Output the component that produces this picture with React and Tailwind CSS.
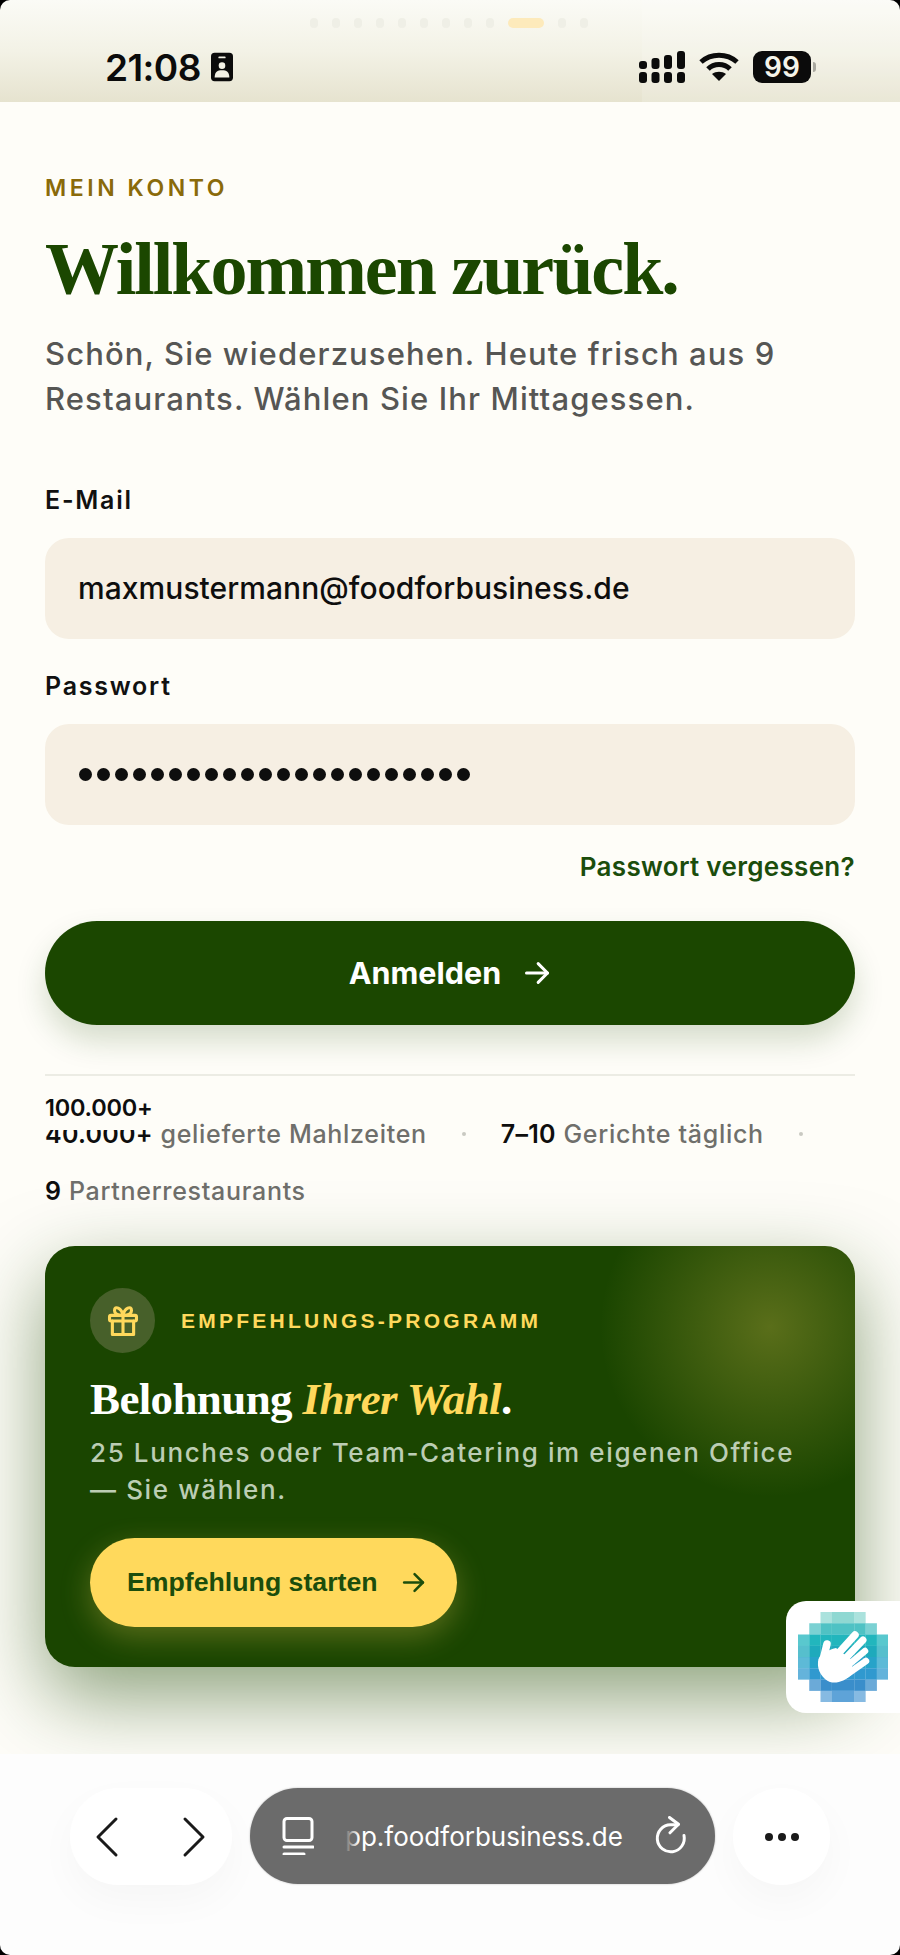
import React from "react";

const gridRows = [
  [2, 5],
  [1, 6],
  [0, 7],
  [0, 7],
  [0, 7],
  [0, 7],
  [1, 6],
  [2, 5],
];
const rowColors = ["#8fd8d2", "#4fc2c4", "#22b6bd", "#1eaabc", "#27a3c9", "#3099cf", "#3a8ecb", "#5ea3d8"];

const HandLogo = () => (
  <svg width="90" height="90" viewBox="0 0 90 90">
    {gridRows.map(([from, to], r) =>
      Array.from({ length: to - from + 1 }).map((_, i) => {
        const c = from + i;
        const edge = c === from || c === to;
        return (
          <rect
            key={`${r}-${c}`}
            x={c * 11.25}
            y={r * 11.25}
            width="11.4"
            height="11.4"
            fill={rowColors[r]}
            opacity={edge ? 0.75 : 1}
          />
        );
      })
    )}
    <g stroke="#fff" strokeLinecap="round" fill="none">
      <path d="M24 52 L29 32" strokeWidth="7.5" />
      <path d="M38 44 L57 23" strokeWidth="7.5" />
      <path d="M44 50 L65 28" strokeWidth="7" />
      <path d="M48 55 L67 39" strokeWidth="6.5" />
      <path d="M48 63 L68 49" strokeWidth="6.5" />
    </g>
    <path d="M20 50 C20 42 30 38 38 36 L54 48 L54 62 C47 69 39 72 32 70 C25 67 19 59 20 50 Z" fill="#fff" />
  </svg>
);

const ArrowRight = ({ size = 28, color = "#fff", sw = 2.6 }) => (
  <svg width={size} height={size} viewBox="0 0 24 24" fill="none" stroke={color} strokeWidth={sw} strokeLinecap="round" strokeLinejoin="round">
    <path d="M3 12h18" />
    <path d="M13 4l8 8-8 8" />
  </svg>
);

const StatusBar = () => (
  <div className="relative flex h-[102px] shrink-0 items-center justify-between rounded-t-[10px] bg-gradient-to-b from-[#fbfbf6] via-[#f3f2e6] to-[#e6e3cf] pl-[105px] pr-[84px] pt-[32px]">
    <div className="absolute inset-y-0 right-0 w-[258px] rounded-tr-[10px] bg-white/15" />
    <div className="absolute left-[310px] top-[18px] flex items-center gap-[14px]">
      {Array.from({ length: 9 }).map((_, i) => (
        <div key={i} className="h-[10px] w-[8px] rounded-full bg-[#efefe6]" />
      ))}
      <div className="h-[10px] w-[36px] rounded-full bg-[#fdeabb]" />
      {Array.from({ length: 2 }).map((_, i) => (
        <div key={i} className="h-[10px] w-[8px] rounded-full bg-[#efefe6]" />
      ))}
    </div>
    <div className="relative flex items-center gap-[10px]">
      <span className="text-[37px] font-semibold leading-none tracking-[-0.015em] text-[#0b0b0b]">21:08</span>
      <svg width="22" height="30" viewBox="0 0 24 31">
        <rect width="24" height="31" rx="4" fill="#0b0b0b" />
        <rect x="8" y="4" width="8" height="2" rx="1" fill="#f3f2e6" />
        <circle cx="12" cy="14" r="3.6" fill="#f3f2e6" />
        <path d="M4 27c0-6 3-8 8-8s8 2 8 8z" fill="#f3f2e6" />
      </svg>
    </div>
    <div className="relative flex items-center gap-[14px]">
      <svg width="46" height="32" viewBox="0 0 46 32" fill="#0b0b0b">
        <rect x="0" y="10" width="8" height="8" rx="3" />
        <rect x="12.5" y="7" width="8" height="11" rx="3" />
        <rect x="25" y="4" width="8" height="14" rx="3" />
        <rect x="38" y="0" width="8" height="18" rx="3" />
        <rect x="0" y="21" width="8" height="11" rx="3" />
        <rect x="12.5" y="21" width="8" height="11" rx="3" />
        <rect x="25" y="21" width="8" height="11" rx="3" />
        <rect x="38" y="21" width="8" height="11" rx="3" />
      </svg>
      <svg width="40" height="30" viewBox="0 0 40 30" fill="none" stroke="#0b0b0b" strokeWidth="5">
        <path d="M2 10C12 1 28 1 38 10" />
        <path d="M9 17C15 11 25 11 31 17" />
        <path d="M20 29l-7-7c4-3 10-3 14 0z" fill="#0b0b0b" stroke="none" />
      </svg>
      <div className="flex items-center gap-[2px]">
        <div className="flex h-[32px] w-[58px] items-center justify-center rounded-[9px] bg-[#0b0b0b] text-[28px] font-semibold leading-none text-[#f5f4ea]">
          99
        </div>
        <div className="h-[10px] w-[3px] rounded-r-full bg-[#a9a89f]" />
      </div>
    </div>
  </div>
);

const Field = ({ label, children }) => (
  <div>
    <div className="text-[25px] font-semibold leading-[30px] tracking-[0.07em] text-[#111]">{label}</div>
    <div className="mt-[23px] flex h-[101px] items-center rounded-[24px] bg-[#f6efe3] px-[33px]">{children}</div>
  </div>
);

const Stat = ({ value, label }) => (
  <div className="whitespace-nowrap text-[25px] leading-[34px] tracking-[0.028em] text-[#6f6f6b]">
    <span className="font-semibold tracking-[0.01em] text-[#0e0e0e]">{value}</span> <span className="font-medium">{label}</span>
  </div>
);

const Dot = () => <div className="mx-[35px] h-[4px] w-[4px] rounded-full bg-[#c9c9c2]" />;

const ReferralCard = () => (
  <div className="relative mt-[38px] h-[421px] rounded-[30px] bg-[#1a4500] bg-[radial-gradient(circle_at_725px_81px,rgba(255,217,92,0.28),rgba(255,217,92,0)_170px)] px-[45px] pt-[42px] shadow-[0_30px_80px_rgba(27,71,0,0.5)]">
    <div className="flex items-center gap-[26px]">
      <div className="flex h-[65px] w-[65px] items-center justify-center rounded-full bg-[#47602a]">
        <svg width="34" height="34" viewBox="0 0 24 24" fill="none" stroke="#ffd95c" strokeWidth="2.2" strokeLinecap="round" strokeLinejoin="round">
          <rect x="2.5" y="8" width="19" height="4" rx="1" />
          <path d="M4.500 12v9.500h15V12" />
          <path d="M12 8v13.500" />
          <path d="M12 8C11 2.500 6 1 6 4.500 6 7 9 8 12 8z" />
          <path d="M12 8c1-5.500 6-7 6-3.500C18 7 15 8 12 8z" />
        </svg>
      </div>
      <div className="font-['Liberation_Sans',sans-serif] text-[21px] font-bold tracking-[0.155em] text-[#ffd95c]">EMPFEHLUNGS-PROGRAMM</div>
    </div>
    <div className="mt-[21px] font-['Liberation_Serif',serif] text-[45px] font-bold leading-[50px] tracking-[-0.014em] text-white">
      Belohnung <em className="text-[#ffd95c]">Ihrer Wahl</em>.
    </div>
    <div className="mt-[10px] text-[26px] font-medium leading-[37px] tracking-[0.062em] text-[#bccdb4]">
      25 Lunches oder Team-Catering im eigenen Office — Sie wählen.
    </div>
    <div className="mt-[30px] flex h-[89px] w-[367px] items-center justify-between rounded-full bg-[#ffd95c] pl-[37px] pr-[31px] shadow-[0_10px_30px_rgba(255,217,92,0.28)]">
      <span className="font-['Liberation_Sans',sans-serif] text-[26.7px] font-bold text-[#1b4d0c]">Empfehlung starten</span>
      <ArrowRight size={25} color="#1b4d0c" sw={2.4} />
    </div>
  </div>
);

const Toolbar = () => (
  <div className="relative flex h-[201px] shrink-0 items-start gap-[18px] rounded-b-[10px] bg-[#fdfdfd] px-[70px] pt-[34px]">
    <div className="flex h-[97px] w-[162px] items-center justify-between rounded-[48px] bg-white pl-[24px] pr-[25px] shadow-[0_16px_40px_rgba(0,0,0,0.03)]">
      <svg width="26" height="42" viewBox="0 0 26 42" fill="none" stroke="#1a1a1a" strokeWidth="3" strokeLinecap="round" strokeLinejoin="round">
        <path d="M22 3L4 21l18 18" />
      </svg>
      <svg width="26" height="42" viewBox="0 0 26 42" fill="none" stroke="#1a1a1a" strokeWidth="3" strokeLinecap="round" strokeLinejoin="round">
        <path d="M4 3l18 18L4 39" />
      </svg>
    </div>
    <div className="relative flex h-[96px] w-[465px] items-center rounded-[48px] bg-[#6b6b6b] pl-[32px] pr-[28px] text-white shadow-[0_0_2px_rgba(0,0,0,0.3)]">
      <svg width="32" height="38" viewBox="0 0 32 38" fill="none" stroke="#fff" strokeWidth="3" strokeLinecap="round">
        <rect x="2" y="1.500" width="28" height="22" rx="3" />
        <path d="M2 30h29" />
        <path d="M2 37h20" />
      </svg>
      <div className="relative ml-[31px] w-[275px] pt-[1px]">
        <div className="whitespace-nowrap text-right text-[26px] leading-[32px]">pp.foodforbusiness.de</div>
        <div className="absolute inset-y-0 left-0 w-[14px] bg-gradient-to-r from-[#6b6b6b] to-transparent" />
      </div>
      <svg width="34" height="40" viewBox="0 0 34 40" fill="none" stroke="#fff" strokeWidth="3" strokeLinecap="round" strokeLinejoin="round" className="ml-auto">
        <path d="M31 19.500A13.500 13.500 0 1 1 17.500 8.800h7.500" />
        <path d="M16.500 1.500l9 6.800-8.500 8.500" />
      </svg>
    </div>
    <div className="flex h-[97px] w-[97px] items-center justify-center gap-[5px] rounded-[48px] bg-white shadow-[0_16px_40px_rgba(0,0,0,0.03)]">
      {[0, 1, 2].map((i) => (
        <div key={i} className="h-[8px] w-[8px] rounded-full bg-[#1a1a1a]" />
      ))}
    </div>
  </div>
);

export default function App() {
  return (
    <div className="relative flex h-[1955px] w-[900px] flex-col overflow-hidden bg-black font-['Inter',sans-serif]">
      <StatusBar />
      <div className="min-h-0 flex-1 overflow-hidden bg-[#fefdf8] px-[45px] pt-[73px]">
        <div className="text-[23px] font-semibold leading-[26px] tracking-[0.155em] text-[#8a6a0a]">MEIN KONTO</div>
        <h1 className="mt-[26px] font-['Liberation_Serif',serif] text-[74px] font-bold leading-[84px] tracking-[-0.027em] text-[#1b4700]">
          Willkommen zurück.
        </h1>
        <p className="mt-[20px] text-[31px] font-medium leading-[45px] tracking-[0.036em] text-[#565654]">
          Schön, Sie wiederzusehen. Heute frisch aus 9 Restaurants. Wählen Sie Ihr Mittagessen.
        </p>
        <div className="mt-[64px] flex flex-col gap-[32px]">
          <Field label="E-Mail">
            <span className="text-[30px] font-medium tracking-[0.002em] text-[#0e0e0e]">maxmustermann@foodforbusiness.de</span>
          </Field>
          <Field label="Passwort">
            <div className="ml-[1px] flex gap-[5px]">
              {Array.from({ length: 22 }).map((_, i) => (
                <div key={i} className="h-[13px] w-[13px] rounded-full bg-[#0e0e0e]" />
              ))}
            </div>
          </Field>
        </div>
        <div className="mt-[25px] text-right text-[26px] font-semibold leading-[34px] tracking-[0.012em] text-[#1b4d0c]">Passwort vergessen?</div>
        <div className="mt-[37px] flex h-[104px] items-center justify-center gap-[22px] rounded-full bg-[#1b4700] shadow-[0_16px_30px_rgba(27,71,0,0.18)]">
          <span className="text-[30.5px] font-bold text-white">Anmelden</span>
          <ArrowRight size={28} />
        </div>
        <div className="mt-[49px] h-[2px] bg-[#ecece4]" />
        <div className="relative mt-[41px]">
          <div className="flex flex-wrap items-center gap-y-[23px]">
            <Stat value="40.000+" label="gelieferte Mahlzeiten" />
            <Dot />
            <Stat value="7–10" label="Gerichte täglich" />
            <Dot />
            <Stat value="9" label="Partnerrestaurants" />
          </div>
          <div className="absolute -top-[24px] left-0 h-[37px] w-[110px] bg-[#fefdf8] text-[23.5px] font-semibold leading-[30px] tracking-[-0.01em] text-[#0e0e0e]">100.000+</div>
        </div>
        <ReferralCard />
      </div>
      <Toolbar />
      <div className="absolute left-[786px] top-[1601px] flex h-[112px] w-[114px] items-center rounded-l-[20px] bg-white pl-[12px]">
        <HandLogo />
      </div>
    </div>
  );
}
